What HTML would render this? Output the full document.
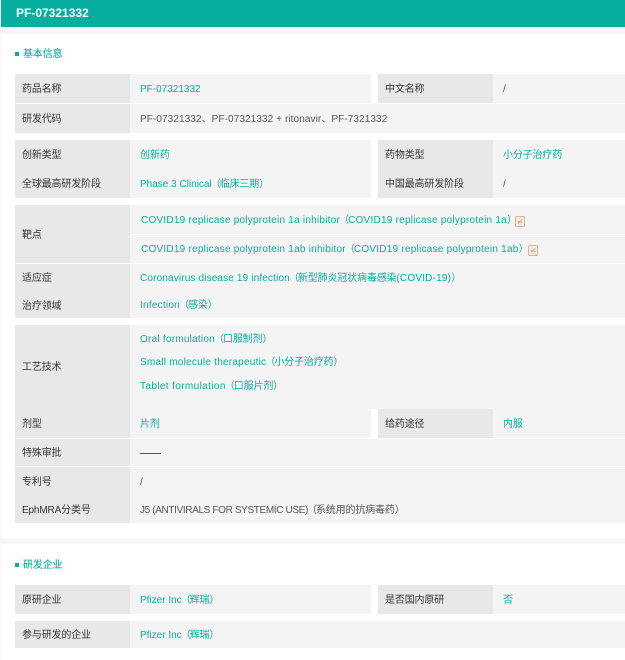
<!DOCTYPE html>
<html lang="zh"><head><meta charset="utf-8"><title>PF-07321332</title>
<style>
html,body{margin:0;padding:0;width:625px;height:660px;overflow:hidden;background:#fff}
body{position:relative;font-family:"Liberation Sans","Noto Sans CJK SC",sans-serif;font-size:10px;color:#555}
div{position:absolute}
.l{left:15px;width:115px;background:#e8e8e8}
.v{left:130px;background:#f4f4f4}
.t{height:14px;line-height:14px;white-space:nowrap;margin-top:2px;letter-spacing:-.15px}
.g{color:#07ad9f}
.k{color:#333}
.s{width:4px;height:4px;left:15px;background:#07ad9f}
.h{-webkit-text-stroke:.1px #07ad9f}
.p{letter-spacing:-1px;margin-left:-1px}
.n{letter-spacing:0}
.a{letter-spacing:.24px}
.b{letter-spacing:.15px}
svg{position:absolute}
</style></head><body>
<div style="left:0;top:0;width:1px;height:660px;background:#f7f7f7"></div>
<div style="left:1px;top:0;width:624px;height:27px;background:#07ad9f"></div>
<div style="left:1px;top:27px;width:624px;height:7px;background:#f7f7f7"></div>
<div style="left:1px;top:538px;width:624px;height:6px;background:#f7f7f7"></div>
<div class="t" style="left:16px;top:6px;margin-top:0;letter-spacing:0;color:#fff;font-weight:bold;font-size:12px">PF-07321332</div>

<div class="s" style="top:52px"></div>
<div class="t g h" style="left:23px;top:46px">基本信息</div>

<div class="l" style="top:74px;height:29px"></div><div class="v" style="top:74px;width:241px;height:29px"></div>
<div class="l" style="left:378px;top:74px;height:29px"></div><div class="v" style="left:493px;top:74px;width:132px;height:29px"></div>
<div class="l" style="top:104px;height:29px"></div><div class="v" style="top:104px;width:495px;height:29px"></div>

<div class="l" style="top:140px;height:58px"></div><div class="v" style="top:140px;width:241px;height:58px"></div>
<div class="l" style="left:378px;top:140px;height:58px"></div><div class="v" style="left:493px;top:140px;width:132px;height:58px"></div>

<div class="l" style="top:205px;height:58px"></div><div class="v" style="top:205px;width:495px;height:29px"></div>
<div class="v" style="top:235px;width:495px;height:28px"></div>
<div class="l" style="top:264px;height:54px"></div><div class="v" style="top:264px;width:495px;height:54px"></div>

<div class="l" style="top:325px;height:113px"></div><div class="v" style="top:325px;width:495px;height:84px"></div>
<div class="v" style="top:409px;width:241px;height:29px"></div>
<div class="l" style="left:378px;top:409px;height:29px"></div><div class="v" style="left:493px;top:409px;width:132px;height:29px"></div>
<div class="l" style="top:439px;height:27px"></div><div class="v" style="top:439px;width:495px;height:27px"></div>
<div class="l" style="top:467px;height:56px"></div><div class="v" style="top:467px;width:495px;height:56px"></div>

<div class="s" style="top:563px"></div>
<div class="t g h" style="left:23px;top:557px">研发企业</div>
<div class="l" style="top:585px;height:29px"></div><div class="v" style="top:585px;width:241px;height:29px"></div>
<div class="l" style="left:378px;top:585px;height:29px"></div><div class="v" style="left:493px;top:585px;width:132px;height:29px"></div>
<div class="l" style="top:621px;height:27px"></div><div class="v" style="top:621px;width:495px;height:27px"></div>

<div class="t k" style="left:22px;top:81px">药品名称</div>
<div class="t g n" style="left:140px;top:81px">PF-07321332</div>
<div class="t k" style="left:385px;top:81px">中文名称</div>
<div class="t" style="left:503px;top:81px">/</div>
<div class="t k" style="left:22px;top:111px">研发代码</div>
<div class="t" style="left:140px;top:111px;letter-spacing:.09px">PF-07321332、PF-07321332 + ritonavir、PF-7321332</div>
<div class="t k" style="left:22px;top:147px">创新类型</div>
<div class="t g" style="left:140px;top:147px">创新药</div>
<div class="t k" style="left:385px;top:147px">药物类型</div>
<div class="t g" style="left:503px;top:147px">小分子治疗药</div>
<div class="t k" style="left:22px;top:176px">全球最高研发阶段</div>
<div class="t g" style="left:140px;top:176px"><span class="n">Phase 3 Clinical</span><span class="p">（</span>临床三期）</div>
<div class="t k" style="left:385px;top:176px">中国最高研发阶段</div>
<div class="t" style="left:503px;top:176px">/</div>

<div class="t k" style="left:22px;top:227px">靶点</div>
<div class="t g" style="left:141px;top:212px"><span class="a">COVID19 replicase polyprotein 1a inhibitor</span><span class="p">（</span><span class="a">COVID19 replicase polyprotein 1a</span>）</div>
<div class="t g" style="left:141px;top:241px"><span class="a">COVID19 replicase polyprotein 1ab inhibitor</span><span class="p">（</span><span class="a">COVID19 replicase polyprotein 1ab</span>）</div>
<svg style="left:515px;top:216px" width="10" height="11" viewBox="0 0 10 11"><rect x=".5" y=".5" width="9" height="10" rx="1" fill="#f6ebe2" stroke="#e0b595"/><path d="M3 7.5l4-4M2.8 6.3l1.4-1.4M5.8 7.2l1.4-1.4" stroke="#d9a988" fill="none"/></svg>
<svg style="left:528px;top:245px" width="10" height="11" viewBox="0 0 10 11"><rect x=".5" y=".5" width="9" height="10" rx="1" fill="#f6ebe2" stroke="#e0b595"/><path d="M3 7.5l4-4M2.8 6.3l1.4-1.4M5.8 7.2l1.4-1.4" stroke="#d9a988" fill="none"/></svg>

<div class="t k" style="left:22px;top:270px">适应症</div>
<div class="t g" style="left:140px;top:270px"><span class="b">Coronavirus disease 19 infection</span><span class="p">（</span>新型肺炎冠状病毒感染<span style="letter-spacing:.2px">(COVID-19)</span>）</div>
<div class="t k" style="left:22px;top:298px">治疗领域</div>
<div class="t g" style="left:140px;top:297px"><span class="a">Infection</span><span class="p">（</span>感染）</div>

<div class="t k" style="left:22px;top:359px">工艺技术</div>
<div class="t g" style="left:140px;top:331px"><span class="a">Oral formulation</span><span class="p">（</span>口服制剂）</div>
<div class="t g" style="left:140px;top:354px"><span class="a">Small molecule therapeutic</span><span class="p">（</span>小分子治疗药）</div>
<div class="t g" style="left:140px;top:378px"><span style="letter-spacing:.38px">Tablet formulation</span><span class="p">（</span>口服片剂）</div>

<div class="t k" style="left:22px;top:416px">剂型</div>
<div class="t g" style="left:140px;top:416px">片剂</div>
<div class="t k" style="left:385px;top:416px">给药途径</div>
<div class="t g" style="left:503px;top:416px">内服</div>
<div class="t k" style="left:22px;top:445px">特殊审批</div>
<div style="left:140px;top:453px;width:21px;height:1px;background:#555"></div>
<div class="t k" style="left:22px;top:474px">专利号</div>
<div class="t" style="left:140px;top:474px">/</div>
<div class="t k" style="left:22px;top:502px">EphMRA分类号</div>
<div class="t" style="left:140px;top:502px"><span style="letter-spacing:-.36px">J5 (ANTIVIRALS FOR SYSTEMIC USE)</span><span class="p">（</span>系统用的抗病毒药）</div>

<div class="t k" style="left:22px;top:592px">原研企业</div>
<div class="t g" style="left:140px;top:592px"><span class="n">Pfizer Inc</span><span class="p">（</span>辉瑞）</div>
<div class="t k" style="left:385px;top:592px">是否国内原研</div>
<div class="t g" style="left:503px;top:592px">否</div>
<div class="t k" style="left:22px;top:627px">参与研发的企业</div>
<div class="t g" style="left:140px;top:627px"><span class="n">Pfizer Inc</span><span class="p">（</span>辉瑞）</div>
</body></html>
